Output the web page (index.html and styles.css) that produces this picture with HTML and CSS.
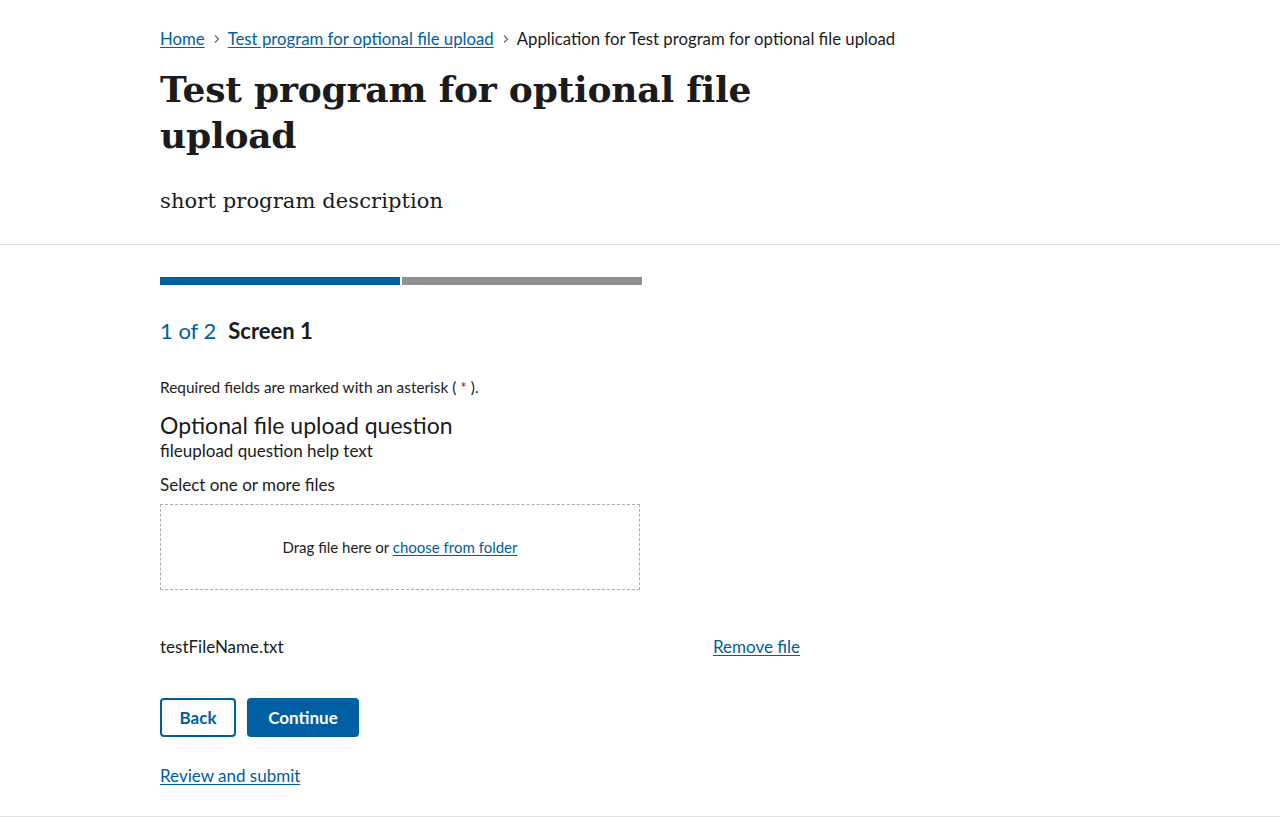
FILE: index.html
```html
<!DOCTYPE html>
<html lang="en">
<head>
<meta charset="utf-8">
<title>Test program for optional file upload</title>
<link rel="stylesheet" href="styles.css">
</head>
<body>
<header class="program-header">
  <div class="wrap">
    <nav class="breadcrumb" aria-label="Breadcrumbs">
      <a href="#">Home</a>
      <span class="crumb-sep" aria-hidden="true">
        <svg width="8" height="10" viewBox="0 0 8 10"><path d="M2 1.5 L5.5 5 L2 8.5" fill="none" stroke="#71767a" stroke-width="1.4"/></svg>
      </span>
      <a href="#">Test program for optional file upload</a>
      <span class="crumb-sep" aria-hidden="true">
        <svg width="8" height="10" viewBox="0 0 8 10"><path d="M2 1.5 L5.5 5 L2 8.5" fill="none" stroke="#71767a" stroke-width="1.4"/></svg>
      </span>
      <span class="crumb-current">Application for Test program for optional file upload</span>
    </nav>
    <h1 class="program-title">Test program for optional file upload</h1>
    <p class="program-desc">short program description</p>
  </div>
</header>

<main class="app-main">
  <div class="wrap">
    <div class="progress">
      <span class="progress-seg done"></span>
      <span class="progress-seg"></span>
    </div>
    <h2 class="screen-title"><span class="step">1 of 2</span><span class="screen-name">Screen 1</span></h2>
    <p class="required-note">Required fields are marked with an asterisk ( <span class="asterisk">*</span> ).</p>

    <div class="question">
      <div class="q-title">Optional file upload question</div>
      <div class="q-help">fileupload question help text</div>
      <label class="q-label">Select one or more files</label>
      <div class="dropzone">
        <span>Drag file here or <a href="#">choose from folder</a></span>
      </div>
      <div class="file-row">
        <span class="file-name">testFileName.txt</span>
        <a href="#" class="remove-link">Remove file</a>
      </div>
    </div>

    <div class="actions">
      <button class="btn btn-outline" type="button">Back</button>
      <button class="btn btn-primary" type="button">Continue</button>
    </div>
    <a href="#" class="review-link">Review and submit</a>
  </div>
</main>
</body>
</html>
```

FILE: styles.css
```css
* { box-sizing: border-box; }

html, body {
  margin: 0;
  padding: 0;
  background: #fff;
  color: #1b1b1b;
  font-family: "Lato", "Liberation Sans", sans-serif;
}

a { color: #005ea2; text-decoration: underline; text-underline-offset: 2px; }

.wrap {
  padding-left: 160px;
}

.program-header {
  border-bottom: 1px solid #dfe1e2;
  padding-top: 27px;
  padding-bottom: 27px;
}

.breadcrumb {
  display: flex;
  align-items: center;
  font-size: 16.75px;
  line-height: 24px;
  height: 24px;
}

.crumb-sep {
  display: inline-flex;
  align-items: center;
  margin: 0 7px 0 8px;
}

.crumb-current { color: #1b1b1b; }

.program-title {
  font-family: "DejaVu Serif", "Liberation Serif", serif;
  font-weight: 700;
  font-size: 36px;
  line-height: 46px;
  max-width: 640px;
  margin: 15px 0 0 0;
  letter-spacing: -0.2px;
}

.program-desc {
  font-family: "DejaVu Serif", "Liberation Serif", serif;
  font-size: 21px;
  line-height: 32px;
  margin: 27px 0 0 0;
  letter-spacing: 0.1px;
}

.app-main {
  border-bottom: 1px solid #dfe1e2;
  padding-top: 32px;
  height: 572px;
}

.progress {
  display: flex;
  gap: 2px;
  width: 482px;
}

.progress-seg {
  display: block;
  width: 240px;
  height: 8px;
  background: #919191;
}

.progress-seg.done { background: #005ea2; }

.screen-title {
  margin: 33px 0 0 0;
  font-size: 22px;
  line-height: 26px;
  font-weight: 400;
  display: flex;
  gap: 12px;
}

.step { color: #005ea2; }
.screen-name { font-weight: 700; }

.required-note {
  margin: 33px 0 0 0;
  font-size: 15.4px;
  line-height: 20px;
}

.asterisk { color: #b50909; }

.question { margin-top: 14px; }

.q-title {
  font-size: 23px;
  line-height: 28px;
}

.q-help {
  margin-top: 1px;
  font-size: 17px;
  line-height: 22px;
}

.q-label {
  display: block;
  margin-top: 12px;
  font-size: 17px;
  line-height: 22px;
}

.dropzone {
  margin-top: 8px;
  width: 480px;
  height: 86px;
  border: 1px dashed #a9aeb1;
  display: flex;
  align-items: center;
  justify-content: center;
  font-size: 15px;
}

.file-row {
  margin-top: 46px;
  width: 640px;
  display: flex;
  justify-content: space-between;
  font-size: 17px;
  line-height: 22px;
}

.actions {
  margin-top: 40px;
  display: flex;
  gap: 11px;
}

.btn {
  font-family: inherit;
  font-size: 17px;
  font-weight: 700;
  height: 39px;
  border-radius: 4px;
  cursor: pointer;
}

.btn-outline {
  width: 76px;
  padding: 0;
  background: #fff;
  color: #005ea2;
  border: 2px solid #005ea2;
}

.btn-primary {
  width: 112px;
  padding: 0;
  background: #005ea2;
  color: #fff;
  border: 0;
}

.review-link {
  display: inline-block;
  margin-top: 28px;
  font-size: 17px;
  line-height: 22px;
}
```
